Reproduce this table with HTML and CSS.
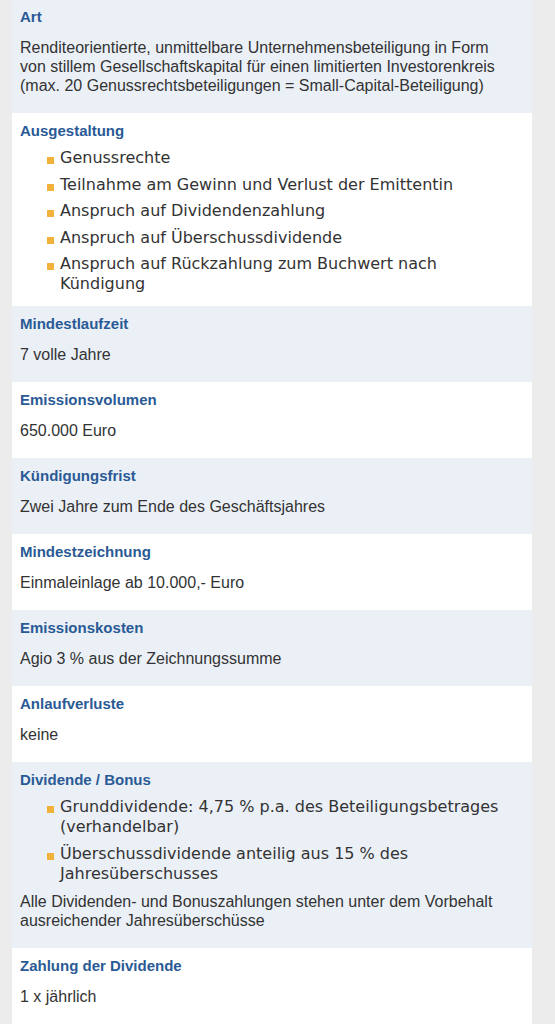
FILE: index.html
```html
<!DOCTYPE html>
<html lang="de">
<head>
  <meta charset="UTF-8" />
  <meta name="viewport" content="width=device-width, initial-scale=1.0"/>
  <title>Eckdaten der Beteiligung</title>
  <link rel="stylesheet" href="styles.css">
</head>
<body>
  <div class="facts">
    <section class="fact">
      <h2 class="fact-title">Art</h2>
      <p class="fact-text">Renditeorientierte, unmittelbare Unternehmensbeteiligung in Form von stillem Gesellschaftskapital für einen limitierten Investorenkreis (max. 20 Genussrechtsbeteiligungen = Small-Capital-Beteiligung)</p>
    </section>

    <section class="fact">
      <h2 class="fact-title">Ausgestaltung</h2>
      <ul class="fact-list">
        <li>Genussrechte</li>
        <li>Teilnahme am Gewinn und Verlust der Emittentin</li>
        <li>Anspruch auf Dividendenzahlung</li>
        <li>Anspruch auf Überschussdividende</li>
        <li>Anspruch auf Rückzahlung zum Buchwert nach Kündigung</li>
      </ul>
    </section>

    <section class="fact">
      <h2 class="fact-title">Mindestlaufzeit</h2>
      <p class="fact-text">7 volle Jahre</p>
    </section>

    <section class="fact">
      <h2 class="fact-title">Emissionsvolumen</h2>
      <p class="fact-text">650.000 Euro</p>
    </section>

    <section class="fact">
      <h2 class="fact-title">Kündigungsfrist</h2>
      <p class="fact-text">Zwei Jahre zum Ende des Geschäftsjahres</p>
    </section>

    <section class="fact">
      <h2 class="fact-title">Mindestzeichnung</h2>
      <p class="fact-text">Einmaleinlage ab 10.000,- Euro</p>
    </section>

    <section class="fact">
      <h2 class="fact-title">Emissionskosten</h2>
      <p class="fact-text">Agio 3 % aus der Zeichnungssumme</p>
    </section>

    <section class="fact">
      <h2 class="fact-title">Anlaufverluste</h2>
      <p class="fact-text">keine</p>
    </section>

    <section class="fact">
      <h2 class="fact-title">Dividende / Bonus</h2>
      <ul class="fact-list">
        <li>Grunddividende: 4,75 % p.a. des Beteiligungsbetrages (verhandelbar)</li>
        <li>Überschussdividende anteilig aus 15 % des Jahresüberschusses</li>
      </ul>
      <p class="fact-text">Alle Dividenden- und Bonuszahlungen stehen unter dem Vorbehalt ausreichender Jahresüberschüsse</p>
    </section>

    <section class="fact">
      <h2 class="fact-title">Zahlung der Dividende</h2>
      <p class="fact-text">1 x jährlich</p>
    </section>
  </div>
</body>
</html>
```

FILE: styles.css
```css
body {
  margin: 0;
  padding: 0;
  background-color: #ececec;
  font-family: "Liberation Sans", Arial, Helvetica, sans-serif;
  color: #333;
}

.facts {
  width: 520px;
  margin-left: 12px;
}

.fact {
  background-color: #ffffff;
  padding: 9px 20px 18px 8px;
}

.fact:first-child {
  padding-top: 8px;
}

.fact:nth-child(odd) {
  background-color: #ebf0f7;
}

.fact-title {
  margin: 0;
  font-size: 15px;
  line-height: 18px;
  font-weight: bold;
  color: #2a5a95;
}

.fact-text {
  margin: 12px 0 0;
  font-size: 16px;
  line-height: 19px;
}

/* Aufzaehlung mit orangen Quadraten */
.fact-list {
  list-style: none;
  margin: 8px 0 -6px;
  padding-left: 27px;
  font-family: "DejaVu Sans", Verdana, sans-serif;
  font-size: 16px;
  line-height: 20px;
  color: #333;
}

.fact-list li {
  display: flex;
  margin-bottom: 6.5px;
}

.fact-list li:last-child {
  margin-bottom: 0;
}

.fact-list li::before {
  content: "";
  flex: none;
  width: 7px;
  height: 7px;
  margin: 9px 6px 0 0;
  background-color: #f2b13a;
}

.fact-list + .fact-text {
  margin-top: 14px;
}
```
